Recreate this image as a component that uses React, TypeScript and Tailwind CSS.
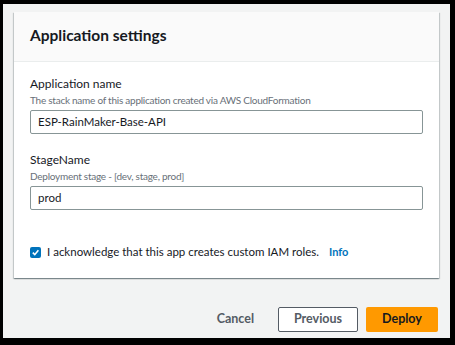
import React from "react";

const font = { fontFamily: "Lato, 'Noto Sans', sans-serif" };

function Field({ label, hint, value }: { label: string; hint: string; value: string }) {
  return (
    <div className="flex flex-col">
      <div className="text-[12px] leading-[18px] text-[#16191f]">{label}</div>
      <div className="text-[10px] leading-[14px] tracking-[-0.25px] text-[#687078]">{hint}</div>
      <div className="mt-[3px] h-[24px] border border-[#879596] rounded-[2px] bg-white flex items-center px-[7px] text-[11.5px] text-[#16191f]">
        {value}
      </div>
    </div>
  );
}

export default function App() {
  return (
    <div className="w-[455px] h-[345px] bg-black pt-[4px] pl-[3px] pr-[5px] pb-[7px]" style={font}>
      <div className="h-full bg-[#f2f3f3] flex flex-col px-[11px] pt-[8px]">
        {/* Card */}
        <div className="bg-white shadow-[0_1px_1px_0_rgba(0,28,36,0.3),1px_1px_1px_0_rgba(0,28,36,0.15),-1px_1px_1px_0_rgba(0,28,36,0.15)]">
          <div className="h-[50px] bg-[#fafafa] border-b border-[#eaeded] flex items-center px-[16px] pb-[2px]">
            <h2 className="text-[15.5px] font-bold text-[#16191f]">Application settings</h2>
          </div>
          <div className="px-[16px] pt-[13px] pb-[17px] flex flex-col">
            <Field
              label="Application name"
              hint="The stack name of this application created via AWS CloudFormation"
              value="ESP-RainMaker-Base-API"
            />
            <div className="mt-[17px]">
              <Field label="StageName" hint="Deployment stage - [dev, stage, prod]" value="prod" />
            </div>
            <div className="mt-[33px] h-[18px] flex items-center">
              <span className="w-[11px] h-[11px] rounded-[2px] bg-[#0073bb] flex items-center justify-center">
                <svg width="9" height="9" viewBox="0 0 10 10">
                  <path d="M2 5.2 L4.2 7.4 L8.2 2.6" fill="none" stroke="white" strokeWidth="1.8" />
                </svg>
              </span>
              <span className="ml-[6px] text-[11.5px] text-[#16191f]">
                I acknowledge that this app creates custom IAM roles.
              </span>
              <span className="ml-[10px] text-[11px] font-bold text-[#0073bb]">Info</span>
            </div>
          </div>
        </div>

        {/* Actions */}
        <div className="mt-[29px] flex justify-end items-center gap-[8px] pr-[1px]">
          <button className="h-[25px] px-[16px] text-[12.5px] font-bold text-[#545b64]">Cancel</button>
          <button className="h-[25px] w-[80px] border border-[#545b64] rounded-[2px] bg-white text-[12.5px] font-bold text-[#545b64]">
            Previous
          </button>
          <button className="h-[25px] w-[72px] rounded-[2px] bg-[#ff9900] text-[12.5px] font-bold text-[#16191f]">
            Deploy
          </button>
        </div>
      </div>
    </div>
  );
}
